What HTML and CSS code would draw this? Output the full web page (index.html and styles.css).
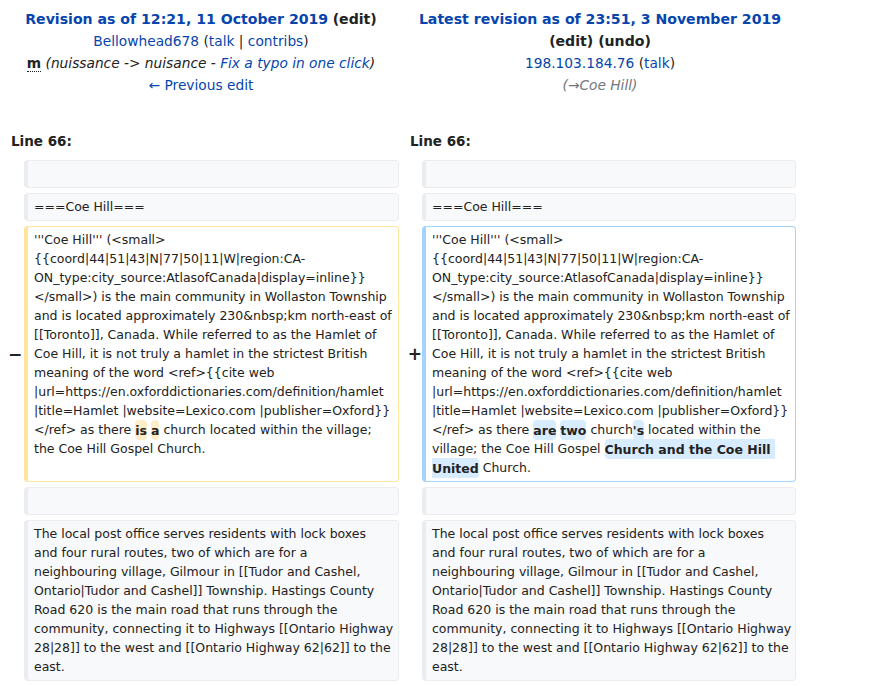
FILE: index.html
```html
<!DOCTYPE html>
<html lang="en">
<head>
<meta charset="utf-8">
<title>Coe Hill: Difference between revisions</title>
<link rel="stylesheet" href="styles.css">
</head>
<body>
<div class="page">
  <div class="grid diff-header">
    <div class="h-left">
      <div class="title-line"><a class="rev-title" href="#">Revision as of 12:21, 11 October 2019</a> <span class="tools">(edit)</span></div>
      <div><a href="#">Bellowhead678</a> (<a href="#">talk</a> | <a href="#">contribs</a>)</div>
      <div><abbr class="minor" title="This is a minor edit">m</abbr> <span class="comment">(nuissance -&gt; nuisance - <a href="#">Fix a typo in one click</a>)</span></div>
      <div><a href="#">← Previous edit</a></div>
    </div>
    <div class="h-right">
      <div class="title-line"><a class="rev-title" href="#">Latest revision as of 23:51, 3 November 2019</a></div>
      <div class="title-line"><span class="tools">(edit) (undo)</span></div>
      <div><a href="#">198.103.184.76</a> (<a href="#">talk</a>)</div>
      <div><span class="comment autocomment">(→Coe Hill)</span></div>
    </div>
  </div>

  <div class="grid lineno-row">
    <div class="ln-left">Line 66:</div>
    <div class="ln-right">Line 66:</div>
  </div>

  <div class="grid rows">
    <div class="marker"></div>
    <div class="cell context">&nbsp;</div>
    <div class="marker"></div>
    <div class="cell context">&nbsp;</div>

    <div class="marker"></div>
    <div class="cell context">===Coe Hill===</div>
    <div class="marker"></div>
    <div class="cell context">===Coe Hill===</div>

    <div class="marker m-left">−</div>
    <div class="cell deleted">'''Coe Hill''' (&lt;small&gt;<br>{{coord|44|51|43|N|77|50|11|W|region:CA-<br>ON_type:city_source:AtlasofCanada|display=inline}}<br>&lt;/small&gt;) is the main community in Wollaston Township<br>and is located approximately 230&amp;nbsp;km north-east of<br>[[Toronto]], Canada. While referred to as the Hamlet of<br>Coe Hill, it is not truly a hamlet in the strictest British<br>meaning of the word &lt;ref&gt;{{cite web<br>|url=https://en.oxforddictionaries.com/definition/hamlet<br>|title=Hamlet |website=Lexico.com |publisher=Oxford}}<br>&lt;/ref&gt; as there <del class="hl">is</del> <del class="hl">a</del> church located within the village;<br>the Coe Hill Gospel Church.</div>
    <div class="marker m-right">+</div>
    <div class="cell added">'''Coe Hill''' (&lt;small&gt;<br>{{coord|44|51|43|N|77|50|11|W|region:CA-<br>ON_type:city_source:AtlasofCanada|display=inline}}<br>&lt;/small&gt;) is the main community in Wollaston Township<br>and is located approximately 230&amp;nbsp;km north-east of<br>[[Toronto]], Canada. While referred to as the Hamlet of<br>Coe Hill, it is not truly a hamlet in the strictest British<br>meaning of the word &lt;ref&gt;{{cite web<br>|url=https://en.oxforddictionaries.com/definition/hamlet<br>|title=Hamlet |website=Lexico.com |publisher=Oxford}}<br>&lt;/ref&gt; as there <ins class="hl">are</ins> <ins class="hl">two</ins> church<ins class="hl">'s</ins> located within the<br>village; the Coe Hill Gospel <ins class="hl">Church and the Coe Hill&nbsp;<br>United</ins> Church.</div>

    <div class="marker"></div>
    <div class="cell context">&nbsp;</div>
    <div class="marker"></div>
    <div class="cell context">&nbsp;</div>

    <div class="marker"></div>
    <div class="cell context">The local post office serves residents with lock boxes<br>and four rural routes, two of which are for a<br>neighbouring village, Gilmour in [[Tudor and Cashel,<br>Ontario|Tudor and Cashel]] Township. Hastings County<br>Road 620 is the main road that runs through the<br>community, connecting it to Highways [[Ontario Highway<br>28|28]] to the west and [[Ontario Highway 62|62]] to the<br>east.</div>
    <div class="marker"></div>
    <div class="cell context">The local post office serves residents with lock boxes<br>and four rural routes, two of which are for a<br>neighbouring village, Gilmour in [[Tudor and Cashel,<br>Ontario|Tudor and Cashel]] Township. Hastings County<br>Road 620 is the main road that runs through the<br>community, connecting it to Highways [[Ontario Highway<br>28|28]] to the west and [[Ontario Highway 62|62]] to the<br>east.</div>
  </div>
</div>
</body>
</html>
```

FILE: styles.css
```css
body {
  margin: 0;
  font-family: "DejaVu Sans", sans-serif;
  color: #222;
  background: #fff;
}

.page {
  padding: 8px 0 0 8px;
}

.grid {
  display: grid;
  grid-template-columns: 16px 375px 23px 374px;
}

a {
  color: #0645ad;
  text-decoration: none;
}

.diff-header {
  font-size: 13.75px;
  line-height: 22px;
  text-align: center;
}

.title-line {
  font-size: 14.1px;
}

.h-left {
  grid-column: 1 / 3;
  padding-right: 5px;
}

.h-right {
  grid-column: 3 / 5;
  padding-left: 5px;
}

.rev-title {
  font-weight: bold;
}

.tools {
  font-weight: bold;
  color: #222;
}

.minor {
  font-weight: bold;
  text-decoration: none;
  border-bottom: 1px dotted #222;
}

.comment {
  font-style: italic;
}

.autocomment {
  color: #72777d;
}

.lineno-row {
  margin-top: 34px;
  margin-bottom: 8px;
  font-size: 13.5px;
  font-weight: bold;
  line-height: 22px;
}

.ln-left {
  grid-column: 1 / 3;
  padding-left: 3px;
}

.ln-right {
  grid-column: 3 / 5;
  padding-left: 11px;
}

.rows {
  row-gap: 5px;
  font-size: 12.5px;
  line-height: 19px;
}

.cell {
  border: 1px solid;
  border-left-width: 4px;
  border-radius: 4px;
  padding: 3px 2px 4px 6px;
  white-space: nowrap;
  overflow: hidden;
}

.context {
  background: #f8f9fa;
  border-color: #eaecf0;
}

.deleted {
  background: #fff;
  border-color: #ffe49c;
}

.added {
  background: #fff;
  border-color: #a3d3ff;
}

.marker {
  align-self: center;
  text-align: right;
  font-weight: bold;
  font-size: 17px;
  line-height: 19px;
  color: #222;
}

.m-left {
  padding-right: 2px;
}

.m-right {
  padding-right: 0;
}

.hl {
  font-weight: bold;
  text-decoration: none;
  border-radius: 4px;
  padding: 0.2em 0;
}

del.hl {
  background: #feeec8;
}

ins.hl {
  background: #d8ecff;
}
```
